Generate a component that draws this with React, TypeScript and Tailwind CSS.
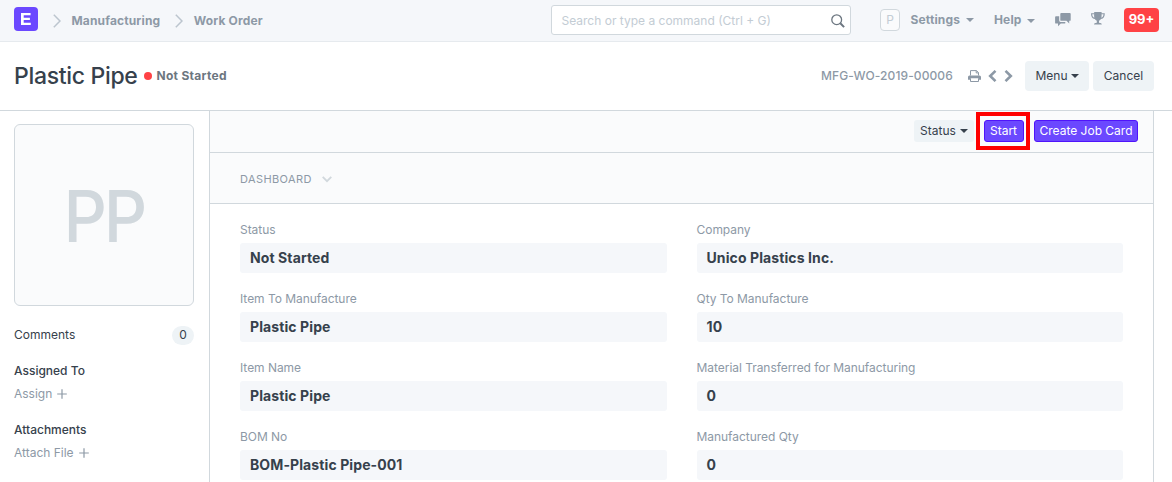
import type { ReactNode } from "react";

const Caret = ({ className = "" }: { className?: string }) => (
  <svg width="8" height="4" viewBox="0 0 8 4" className={className} fill="currentColor">
    <path d="M0 0h8L4 4z" />
  </svg>
);

const Crumb = ({ children, className }: { children: ReactNode; className: string }) => (
  <>
    <svg width="8" height="14" viewBox="0 0 8 14" fill="none" stroke="#bcc5ce" strokeWidth="1.5" className={className}>
      <path d="M.8.8 7 7 .8 13.2" />
    </svg>
    <span>{children}</span>
  </>
);

const Plus = ({ className = "" }: { className?: string }) => (
  <svg width="10" height="10" viewBox="0 0 10 10" stroke="#8d99a6" strokeWidth="1.2" className={className}>
    <path d="M5 .2v9.6M.2 5h9.6" />
  </svg>
);

function Navbar() {
  return (
    <header className="flex h-[42px] shrink-0 items-center border-b border-[#e6eaee] bg-[#f5f7fa] pl-3.5 pr-[13px] text-xs font-bold text-[#8d99a6]">
      <div className="mt-[-4px] flex h-6 w-6 items-center justify-center rounded bg-[#6b48ff]">
        <svg width="10" height="12" viewBox="0 0 10 12" fill="#fff">
          <path d="M0 0h9.6v2.3H2.7v2.4h6.2V7H2.7v2.7h7.1V12H0z" />
        </svg>
      </div>
      <div className="flex w-[513px] items-center tracking-[0.15px]">
        <Crumb className="ml-[15px] mr-[10.5px]">Manufacturing</Crumb>
        <Crumb className="ml-[15px] mr-[10.5px]">Work Order</Crumb>
      </div>
      <div className="mt-[-1px] flex h-[30px] w-[300px] items-center justify-between rounded-[3px] border border-[#d1d8dd] bg-white pl-[9.5px] pr-[5px] font-normal text-[#c3ccd4]">
        <span className="mt-px">Search or type a command (Ctrl + G)</span>
        <svg width="14" height="14" viewBox="0 0 14 14" fill="none" stroke="#6c7680" className="mt-0.5">
          <circle cx="5.7" cy="5.7" r="4.9" strokeWidth="1.3" />
          <path d="m9.3 9.3 3.8 3.8" strokeWidth="2" />
        </svg>
      </div>
      <div className="ml-[29px] mt-[-2px] flex h-[22px] w-5 items-center justify-center rounded border border-[#d1d8dd] bg-[#fafbfc] font-normal text-[#c3ccd4]">
        P
      </div>
      <span className="ml-[10.5px] mt-[-2px] w-[51.5px] tracking-[0.15px]">Settings</span>
      <Caret className="ml-1 mt-[-2px]" />
      <span className="ml-5 mt-[-2px] w-[29px] tracking-[0.15px]">Help</span>
      <Caret className="ml-1" />
      <svg width="16" height="14" viewBox="0 0 16 14" fill="currentColor" className="ml-5 mt-[-2px]">
        <path d="M6.200 0h8.600q.9 0 .9.900v6q0 .9-.9.900h-.6v2.700L11.500 7.800H6.200q-.9 0-.9-.9v-6Q5.300 0 6.200 0z" />
        <path d="M1 3.300h3.200v4.300q0 1.300 1.300 1.300h4.800v1q0 .7-.8.7H5.800L3 13.300v-2.700H1q-.9 0-.9-.9V4.200q0-.9.900-.9z" />
      </svg>
      <svg width="14" height="13" viewBox="0 0 14 13" fill="currentColor" className="ml-[20px] mt-[-4px]">
        <path d="M3.200 0h7.400v1.200h3.200c0 3.300-1.100 5.400-3.800 5.800-.5.900-1.200 1.400-2 1.700v2.100c1.700.1 2.800.6 2.800 1.600H3c0-1 1.100-1.500 2.800-1.600V8.700c-.8-.3-1.500-.8-2-1.700C1.100 6.600 0 4.500 0 1.200h3.200zM1.200 2.300c.1 1.700.8 2.900 2.100 3.400-.2-1-.2-2.200-.2-3.400zm9.400 0c0 1.200 0 2.400-.2 3.400 1.300-.5 2-1.700 2.100-3.400z" fillRule="evenodd" />
      </svg>
      <span className="ml-auto mt-[-2px] flex h-6 w-[35px] items-center justify-center rounded bg-[#ff4245] text-[13px] text-white">99+</span>
    </header>
  );
}

function PageHead() {
  return (
    <div className="flex h-[69px] shrink-0 items-center border-b border-[#d1d8dd] pl-3.5 pr-[18px] text-xs">
      <h1 className="w-[130px] whitespace-nowrap text-[23px] font-medium leading-7 tracking-[-0.32px]">Plastic Pipe</h1>
      <span className="h-2 w-2 rounded-full bg-[#ff4245]" />
      <span className="ml-[4.5px] mt-[-1px] font-bold tracking-[0.3px] text-[#6c7680]">Not Started</span>
      <span className="ml-auto mr-[13.5px] w-[133px] whitespace-nowrap font-medium tracking-[0.1px] text-[#8d99a6]">MFG-WO-2019-00006</span>
      <svg width="13" height="12" viewBox="0 0 13 12" fill="none" stroke="#8d99a6">
        <path d="M2.500 5.500V.6h6l2 2v2.900M8.200.6v2.300h2.300" />
        <path d="M0 9.700V7q0-1.500 1.500-1.500h10Q13 5.500 13 7v2.700h-2.300V8.300H2.300v1.400z" fill="#8d99a6" stroke="none" />
        <path d="M2.500 8.300v3.200h8V8.300" />
      </svg>
      <svg width="9" height="12" viewBox="0 0 9 12" fill="none" stroke="#8d99a6" strokeWidth="2.600" className="ml-[7.5px]">
        <path d="M7.500.9 2.200 6l5.300 5.100" />
      </svg>
      <svg width="9" height="12" viewBox="0 0 9 12" fill="none" stroke="#8d99a6" strokeWidth="2.600" className="ml-[7px]">
        <path d="M1.500.9 6.800 6l-5.300 5.100" />
      </svg>
      <button className="ml-3 flex h-[30px] w-16 items-center justify-center gap-[3px] rounded bg-[#eef3f6]">
        Menu <Caret />
      </button>
      <button className="ml-1 h-[30px] w-[61px] rounded bg-[#eef3f6]">Cancel</button>
    </div>
  );
}

function Sidebar() {
  return (
    <aside className="w-[209px] pl-3.5 pr-[15px] pt-[13px] text-xs leading-[18px]">
      <div className="flex h-[182px] items-center justify-center rounded-md border border-[#d1d8dd] bg-[#fafbfc] pt-0.5 text-[72px] font-medium tracking-[-3.5px] text-[#d1d8dd]">
        <span className="scale-x-[0.94]">PP</span>
      </div>
      <div className="mt-5 flex h-[19px] items-center justify-between">
        <span className="mt-[-2px]">Comments</span>
        <span className="flex h-[19px] w-[22px] items-center justify-center rounded-full bg-[#eef3f6] pb-px">0</span>
      </div>
      <div className="mt-[17px] font-medium">Assigned To</div>
      <div className="mt-[5px] flex items-center text-[#8d99a6]">
        Assign <Plus className="ml-[5px]" />
      </div>
      <div className="mt-[18px] font-medium">Attachments</div>
      <div className="mt-[5px] flex items-center text-[#8d99a6]">
        Attach File <Plus className="ml-[5px]" />
      </div>
    </aside>
  );
}

const fields = [
  ["Status", "Not Started"],
  ["Company", "Unico Plastics Inc."],
  ["Item To Manufacture", "Plastic Pipe"],
  ["Qty To Manufacture", "10"],
  ["Item Name", "Plastic Pipe"],
  ["Material Transferred for Manufacturing", "0"],
  ["BOM No", "BOM-Plastic Pipe-001"],
  ["Manufactured Qty", "0"],
];

function Form() {
  return (
    <main className="w-[945px] border-x border-[#d1d8dd]">
      <div className="flex h-[42px] items-center justify-end border-b border-[#d1d8dd] bg-[#fafbfc] pr-[15px] text-xs">
        <button className="mt-[-1px] flex h-[22px] w-[60px] items-center justify-center gap-1 rounded-[3px] bg-[#eef3f6]">
          Status <Caret />
        </button>
        <div className="ml-0.5 mt-[-1px] flex h-[38px] w-[54px] items-center justify-center border-4 border-[#ff0000] pl-px">
          <button className="h-[22px] w-10 rounded-[3px] border border-[#5014fb] bg-[#6b48ff] leading-5 text-white">Start</button>
        </div>
        <button className="ml-1 mt-[-1px] h-[22px] w-[104px] whitespace-nowrap rounded-[3px] border border-[#5014fb] bg-[#6b48ff] leading-5 text-white">
          Create Job Card
        </button>
      </div>
      <div className="flex h-[51px] items-center border-b border-[#d1d8dd] bg-[#fafbfc] pl-[30px] pt-0.5 text-[11px] tracking-[0.4px] text-[#8d99a6]">
        <span className="w-[72px]">DASHBOARD</span>
        <svg width="10" height="7" viewBox="0 0 10 7" fill="none" stroke="#d1d8dd" strokeWidth="1.800" className="ml-[10px]">
          <path d="m.7.900 4.300 4.300L9.300.900" />
        </svg>
      </div>
      <div className="grid grid-cols-2 gap-x-[30px] px-[30px] pt-[17px]">
        {fields.map(([label, value]) => (
          <div key={label} className="h-[69px]">
            <div className="h-[22px] text-xs leading-[18px] tracking-[-0.04px] text-[#8d99a6]">{label}</div>
            <div className="h-[30px] rounded-[3px] bg-[#f5f7fa] px-2.5 text-sm font-bold leading-[30px] tracking-[0.1px]">{value}</div>
          </div>
        ))}
      </div>
    </main>
  );
}

export default function App() {
  return (
    <div className="flex h-[482px] w-[1172px] flex-col overflow-hidden bg-white font-['Inter',sans-serif] text-[#36414c]">
      <Navbar />
      <PageHead />
      <div className="flex flex-1">
        <Sidebar />
        <Form />
      </div>
    </div>
  );
}
